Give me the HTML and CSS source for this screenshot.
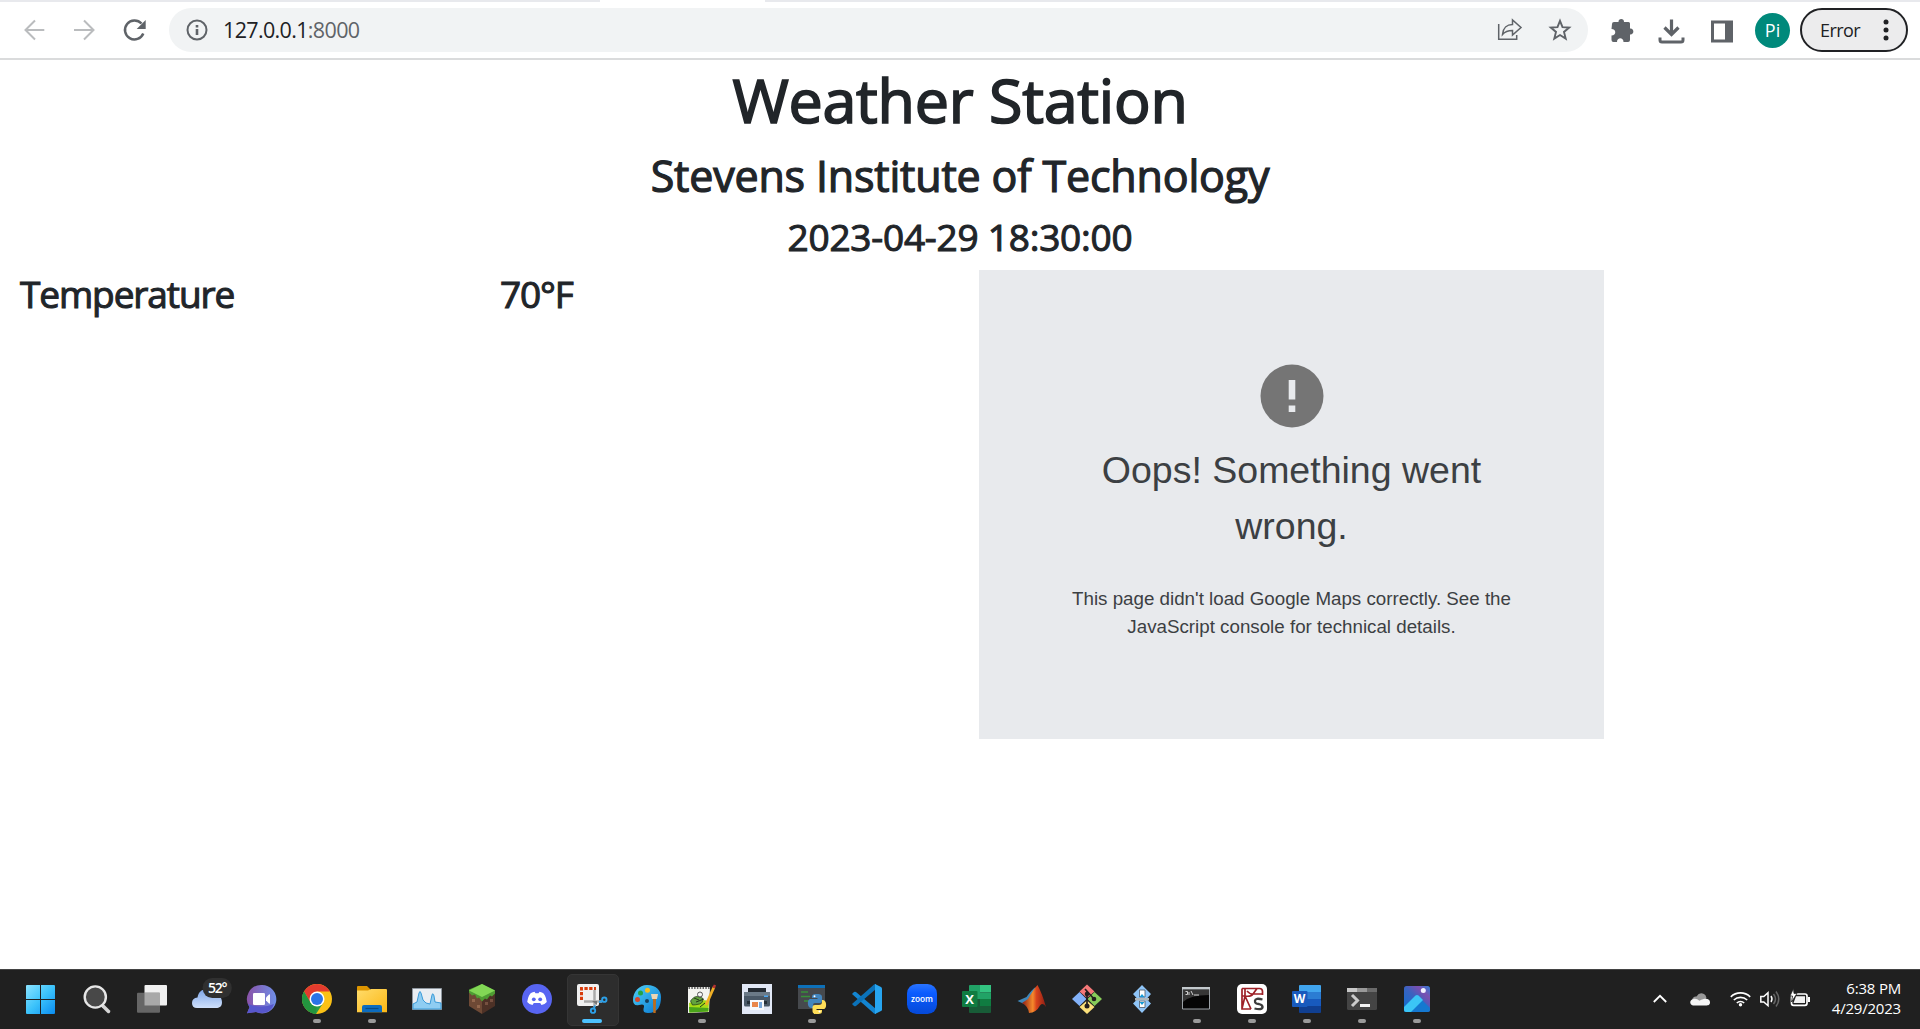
FILE: index.html
```
<!DOCTYPE html>
<html lang="en">
<head>
<meta charset="utf-8">
<title>Weather Station</title>
<link rel="stylesheet" href="styles.css">
</head>
<body>
<div class="screen">
  <div class="tabstrip"><span class="tab"></span></div>
  <header class="toolbar">
    <svg class="nav" width="144" height="56" viewBox="0 0 144 56" fill="none" stroke-width="2">
      <g stroke="#babcbe"><path d="M44.300 28H25.500M35 18.500L25.500 28l9.500 9.500M74 28h19.500M84 18.500l9.500 9.500-9.500 9.500"/></g>
      <path d="M143.300 31.500A9.500 9.500 0 1 1 141.500 21.500" stroke="#5f6368" stroke-width="2.500"/>
      <path d="M145.700 18v9h-9z" fill="#5f6368"/>
    </svg>
    <div class="omnibox">
      <svg width="22" height="22" viewBox="0 0 22 22"><circle cx="11" cy="11" r="9.500" fill="none" stroke="#5f6368" stroke-width="2"/><path d="M9.700 10h2.600v6H9.700zM9.700 6h2.600v2.400H9.700z" fill="#5f6368"/></svg>
      <span class="url">127.0.0.1<span class="port">:8000</span></span>
      <svg class="share" width="26" height="24" viewBox="0 0 26 24" fill="none" stroke="#5f6368" stroke-width="1.500"><path d="M1.700 6v15.300h18V17"/><path d="M5.500 16.500C6 10 10 6.500 15.500 6.500V2L24 9.500 15.500 17v-4.500C11 12.500 8 13.500 5.500 16.500z"/></svg>
      <svg class="star" width="24" height="24" viewBox="0 0 24 24" fill="none" stroke="#5f6368" stroke-width="1.900"><path d="M12 2.800l2.500 6.300 6.700.5-5.200 4.300 1.700 6.700L12 17l-5.700 3.600L8 13.900 2.800 9.600l6.700-.5z"/></svg>
    </div>
    <svg class="actions" width="130" height="28" viewBox="0 0 130 28" fill="#5f6368">
      <path d="M2 8q0-2 2-2h4.500C8 2 14.500 2 14 6h4.500q1.500 0 1.500 1.500v5c4.500-.5 4.500 6.500 0 6v5.500q0 2-2 2h-4.500c0-5-6.500-5-6.500 0H3.500q-2 0-2-2v-4.500c5 0 5-6.500 0-6.500z"/>
      <path d="M50 21.500v2.500q0 2 2 2h19q2 0 2-2v-2.500" fill="none" stroke="#5f6368" stroke-width="3"/><path d="M61.500 3.500v14M54.500 11.500l7 7 7-7" fill="none" stroke="#5f6368" stroke-width="3.200"/>
      <path fill-rule="evenodd" d="M101 4.500h22v22h-22zM104 7.500v16h11V7.500z"/>
    </svg>
    <div class="avatar">Pi</div>
    <div class="error"><span>Error</span><svg width="6" height="24" viewBox="0 0 6 24" fill="#202124"><circle cx="3" cy="4" r="2.500"/><circle cx="3" cy="12" r="2.500"/><circle cx="3" cy="20" r="2.500"/></svg></div>
  </header>

  <main class="page">
    <h1>Weather Station</h1>
    <h2>Stevens Institute of Technology</h2>
    <h3 class="time">2023-04-29 18:30:00</h3>
    <div class="row">
      <h3 class="label">Temperature</h3>
      <h3 class="value">70°F</h3>
      <section class="map">
        <svg width="64" height="64" viewBox="0 0 64 64"><circle cx="32" cy="32" r="31.500" fill="#757575"/><path d="M28.700 16h6.600v19.500h-6.600zM28.700 41.500h6.600v6.500h-6.600z" fill="#e8eaed"/></svg>
        <p class="oops">Oops! Something went wrong.</p>
        <p class="detail">This page didn't load Google Maps correctly. See the JavaScript console for technical details.</p>
      </section>
    </div>
  </main>

  <footer class="taskbar">
    <svg width="0" height="0" class="defs"><defs>
      <linearGradient id="win" x1="0" y1="0" x2="1" y2="1"><stop offset="0" stop-color="#8be3ff"/><stop offset=".5" stop-color="#3cc3fb"/><stop offset="1" stop-color="#0a8cf0"/></linearGradient>
      <linearGradient id="cloud" x1="0" y1="0" x2="0" y2="1"><stop offset="0" stop-color="#7fa6e8"/><stop offset="1" stop-color="#cfe0fb"/></linearGradient>
      <linearGradient id="chat" x1="0" y1="0" x2="1" y2="0"><stop offset="0" stop-color="#8a52a8"/><stop offset="1" stop-color="#6f8fe8"/></linearGradient>
      <linearGradient id="folder" x1="0" y1="0" x2="1" y2="1"><stop offset="0" stop-color="#ffdc6b"/><stop offset="1" stop-color="#fcb714"/></linearGradient>
      <linearGradient id="pal" x1="0" y1="0" x2="1" y2="1"><stop offset="0" stop-color="#4fd0f5"/><stop offset="1" stop-color="#0878d4"/></linearGradient>
      <linearGradient id="mat" x1="0" y1="0" x2="1" y2="0"><stop offset="0" stop-color="#8c1c14"/><stop offset=".45" stop-color="#f58a2c"/><stop offset=".6" stop-color="#d9441c"/><stop offset="1" stop-color="#8c1c14"/></linearGradient>
      <linearGradient id="photo" x1="0" y1="1" x2="1" y2="0"><stop offset="0" stop-color="#0a6fd0"/><stop offset=".5" stop-color="#3a62c0"/><stop offset=".75" stop-color="#7b4fb0"/><stop offset="1" stop-color="#2f7fd8"/></linearGradient>
      <linearGradient id="zm" x1="0" y1="0" x2="0" y2="1"><stop offset="0" stop-color="#2a74ff"/><stop offset=".3" stop-color="#0b5cff"/><stop offset="1" stop-color="#0549d8"/></linearGradient>
    </defs></svg>
    <div class="apps">
      <div class="app"><svg viewBox="0 0 55 60"><path fill="url(#win)" d="M12 16h13v14H11V17q0-1 1-1zM26 16h13q1 0 1 1v13H26zM11 31h14v14H12q-1 0-1-1zM26 31h14v13q0 1-1 1H26z"/></svg></div>
      <div class="app"><svg viewBox="0 0 55 60"><path d="M33 37l5.500 5.500" stroke="#d4d4d4" stroke-width="3.500" stroke-linecap="round"/><circle cx="25.300" cy="28" r="10.600" fill="#484848" stroke="#e6e6e6" stroke-width="2.400"/></svg></div>
      <div class="app"><svg viewBox="0 0 55 60"><rect x="19.500" y="16" width="22.500" height="20.500" rx="1" fill="#f1f1f1"/><rect x="12" y="23.700" width="23" height="20" rx="1" fill="#666"/><path d="M19.500 23.700H35v12.800H19.500z" fill="#a9a9a9"/></svg></div>
      <div class="app"><svg viewBox="0 0 55 60"><path d="M17 39q-5 0-5-5t5.500-5.500C19 18 31 18 32.500 27 39 24 42 29 42 33.500 42 39 37 39 36 39z" fill="url(#cloud)"/><rect x="22.700" y="9" width="29" height="20" rx="9.500" fill="#303030"/><text class="t" x="28" y="24" textLength="19.500" fill="#fff" font-size="14">52°</text></svg></div>
      <div class="app"><svg viewBox="0 0 55 60"><path d="M26.500 16a14.200 14.200 0 1 1-5.500 27l-9 1.300 2.500-6A14.200 14.200 0 0 1 26.500 16z" fill="url(#chat)"/><path d="M13 35q13 5 26 0-3 9-12.500 9-3 0-5.500-1l-9 1.300 2.500-6z" fill="#5757cc"/><rect x="18" y="24" width="12" height="12" rx="1.300" fill="#fff"/><path d="M31 28.500l3-3q1-.5 1 .5v8q0 1-1 .5l-3-3z" fill="#fff"/></svg></div>
      <div class="app run"><svg viewBox="0 0 55 60"><circle cx="27" cy="30" r="15" fill="#fbc116"/><path d="M14 22.500a15 15 0 0 0 12 22.400l7.500-11.400H20.500z" fill="#2a9c49"/><path d="M14 22.500a15 15 0 0 1 26 0H27l-6.500 11z" fill="#e33b2e"/><path d="M14 22.500l7 12 6 2-1.500 8.400A15 15 0 0 1 14 22.500z" fill="#23953f"/><circle cx="27" cy="30" r="7.500" fill="#fff"/><circle cx="27" cy="30" r="6" fill="#2a74e8"/></svg></div>
      <div class="app run"><svg viewBox="0 0 55 60"><path d="M12 18q0-1 1-1h9l3 3v5H12z" fill="#dd9500"/><path d="M12 21.500h11l3-1.500h15q1 0 1 1v22.300H12z" fill="url(#folder)"/><path d="M17 43.300V38q0-2 2-2h16q2 0 2 2v5.300z" fill="#0c6cbf"/><path d="M20.500 39.500h13" stroke="#074a86" stroke-width="1.200"/></svg></div>
      <div class="app"><svg viewBox="0 0 55 60"><path d="M12.500 19.500h29v21h-29z" fill="#e9edf2" stroke="#8f979f"/><path d="M13 35l4-2 2-9q1-3 2 0l2 7 3 3 4 1 2-9q1-3 2 1l1 6 6 1v6H13z" fill="#8fcdf2" stroke="#3b9bd8" stroke-width="1"/></svg></div>
      <div class="app"><svg viewBox="0 0 55 60"><path d="M14 21l13 7v17l-13-8z" fill="#6e4935"/><path d="M40 21l-13 7v17l13-8z" fill="#4d3126"/><path d="M27 15l13 6.500v3l-3 3-2-1-3 4-2-1-3 3-3-4-2 1-2-4-3 1-3-3v-3z" fill="#4f9c33"/><path d="M27 15l13 6.500L27 28l-13-6.500z" fill="#82d755"/><path d="M17 30h3v3h-3zM22 36h3v3h-3z" fill="#93674d"/><path d="M30 33h3v3h-3zM35 30h3v3h-3z" fill="#765040"/></svg></div>
      <div class="app"><svg viewBox="0 0 55 60"><circle cx="27" cy="30" r="15" fill="#5865f2"/><path d="M22 23.500l2.500-.7 1 1.500h3l1-1.500 2.500.7q3.500 1 4.800 9.500-2 2.500-5.300 3l-1.300-2h-6.400l-1.300 2q-3.300-.5-5.300-3Q18.500 24.500 22 23.500z" fill="#fff"/><circle cx="23.800" cy="30.300" r="1.900" fill="#5865f2"/><circle cx="30.200" cy="30.300" r="1.900" fill="#5865f2"/></svg></div>
      <div class="app active"><svg viewBox="0 0 55 60"><rect x="12" y="15" width="22" height="22" rx="2" fill="#f0f0f0"/><path d="M16.500 31V19.500H31" fill="none" stroke="#d83b0b" stroke-width="3" stroke-dasharray="3.300 1.500"/><path d="M29.500 21v17M19 32.500h18" stroke="#aaa" stroke-width="2.500"/><path d="M27 32h5v4z" fill="#777"/><circle cx="39.300" cy="30.700" r="2.200" fill="none" stroke="#2ca0e8" stroke-width="1.900"/><circle cx="28" cy="41.700" r="2.200" fill="none" stroke="#2ca0e8" stroke-width="1.900"/><path d="M34 33l4-1M29 39.500l1-3" stroke="#2ca0e8" stroke-width="1.900"/></svg></div>
      <div class="app"><svg viewBox="0 0 55 60"><path d="M27 16c9 0 14 5 14 12 0 9-3 16-13 16-5 0-5-3-4-6 .5-3-2-3-5-2-4 1-6-1-6-5 0-8 6-15 14-15z" fill="url(#pal)"/><circle cx="17.500" cy="30.500" r="2.500" fill="#d8482b"/><circle cx="20.500" cy="24" r="2.500" fill="#24a347"/><circle cx="27.500" cy="21.300" r="2.500" fill="#f9be1c"/><circle cx="27" cy="32" r="2" fill="#16405e"/><path d="M31 25h7l-1 5h-5z" fill="#ead5b4"/><path d="M33 30h3l-.3 14h-2.400z" fill="#bd6c1c"/></svg></div>
      <div class="app run"><svg viewBox="0 0 55 60"><path d="M13 18h22l-1 25-21 1z" fill="#f4f4f0"/><path d="M13.500 19h21" stroke="#666" stroke-width="2" stroke-dasharray="1.500 1.300"/><path d="M14 34q9-5 20-2l-.5 10.500-19 1z" fill="#a7dc16"/><path d="M14 38l19.500 1-.2 3.500-19 1z" fill="#4aa51a"/><path d="M15.500 32q4-6 9-4l3 1q1 5-3 6t-7 1z" fill="#63a33e" stroke="#1c3716" stroke-width=".7"/><circle cx="25" cy="25.500" r="2.500" fill="#f6f6f6" stroke="#555"/><path d="M21 33l8-3M19 29l5 2M25 38l5-4" stroke="#243b1a" fill="none"/><path d="M39 18L31 36" stroke="#efaf25" stroke-width="2.800"/><path d="M40 16l-1.500 3" stroke="#b63232" stroke-width="2.500"/></svg></div>
      <div class="app"><svg viewBox="0 0 55 60"><path d="M12 15h30v30H12z" fill="#e2e8f6"/><path d="M18 19h18v6H18z" fill="#242b33"/><rect x="14" y="23" width="26" height="14.500" rx="1.500" fill="#4a5968"/><path d="M14 23h26v4H14z" fill="#6b7a88"/><path d="M34 26.500h4v1.500h-4z" fill="#4da8f2"/><path d="M17 32h20v3H17z" fill="#25303a"/><path d="M20 31h14v10H20z" fill="#f7f9fc"/><path d="M22 33h6v5h-6z" fill="#e9864a"/><path d="M29 33h3v6h-3z" fill="#79a8dc"/></svg></div>
      <div class="app run"><svg viewBox="0 0 55 60"><path d="M13 16h27v24H13z" fill="#46494d"/><path d="M13 16h27v3H13z" fill="#0d70b8"/><path d="M16 23h7M16 27.500h9M19 32h5" stroke="#38903a" stroke-width="1.500"/><path d="M32 25c-5 0-5 1-5 4h5.500v1H25c-3 0-3 9 1 9h2v-3q0-2 2-2h5q2 0 2-2v-4c0-3-3-3-5-3z" fill="#4386be"/><path d="M32 45c5 0 5-1 5-4h-5.500v-1H39c3 0 3-9-1-9h-1v2q0 3-3 3h-4q-2.500 0-2.500 2v4c0 3 3 3 4.500 3z" fill="#ffde58"/><circle cx="29.500" cy="27.300" r="1" fill="#fff"/><circle cx="34.500" cy="42.500" r="1" fill="#fff"/></svg></div>
      <div class="app"><svg viewBox="0 0 55 60"><path d="M12 25l2-2q1-.6 2 0l20 17v5l-2-.5z" fill="#1385d1"/><path d="M12 35l2 2q1 .6 2 0l20-17v-5l-2 .5z" fill="#0b72b9"/><path d="M35 15l6 3q1 .5 1 1.500v21q0 1-1 1.500l-6 3z" fill="#27a5f0"/></svg></div>
      <div class="app"><svg viewBox="0 0 55 60"><rect x="12" y="15" width="30" height="30" rx="9.500" fill="url(#zm)"/><text class="z" x="16" y="32.500" textLength="22" lengthAdjust="spacingAndGlyphs" font-size="8.500" fill="#fff">zoom</text></svg></div>
      <div class="app"><svg viewBox="0 0 55 60"><path d="M19 17q0-1 1-1h10v14H19z" fill="#21a266"/><path d="M30 16h11v7.500H30z" fill="#33c481"/><path d="M30 23.500h11V30H30z" fill="#21a366"/><path d="M19 30h22v13q0 1-1 1H20q-1 0-1-1z" fill="#185c37"/><path d="M30 30h11v7H30z" fill="#107c41"/><rect x="12" y="22" width="15.500" height="16" rx="1" fill="#107c41"/><text class="o" x="19.500" y="34.500" text-anchor="middle" font-size="13" fill="#fff">X</text></svg></div>
      <div class="app"><svg viewBox="0 0 55 60"><path d="M12.500 32l9-4q5-7 9-10l-4 13-5 5z" fill="#3f87ba"/><path d="M17 34l6-4q5-9 9.500-14Q37 24 41 38q-3-5-6-1.500-4 7.500-11 7.500-1-7-7-10z" fill="url(#mat)"/></svg></div>
      <div class="app"><svg viewBox="0 0 55 60"><path d="M27 15.500l7.500 7L27 29l-7.500-6.500z" fill="#f57878"/><path d="M34.500 23l7.500 7-7.500 7-7-7z" fill="#88cc5a"/><path d="M27 31.500l7.500 6.500-7.500 7-7.500-7z" fill="#fbe07a"/><path d="M19.500 23l7 7-7 7-7.500-7z" fill="#83b2f9"/><path d="M27 22v16M25 20l9 10" stroke="#241e1e" stroke-width="1.700"/><circle cx="27" cy="25" r="2.300" fill="#241e1e"/><circle cx="34" cy="30" r="2.300" fill="#241e1e"/><circle cx="27" cy="37" r="2.500" fill="#241e1e"/></svg></div>
      <div class="app"><svg viewBox="0 0 55 60"><path d="M27 16l9 9-4.500 5 4.500 4.500L27 44l-9-9.500 4.500-4.500-4.500-5z" fill="#8fc5f8"/><path d="M24.500 21h5.500v7h-5.500zM24.500 32h5.500v6.500h-5.500z" fill="#fff" stroke="#4c5966" stroke-width=".8"/><path d="M20 29h14v2.500H20z" fill="#afb7bb"/><path d="M27 25l2.500 3h-5zM24.500 33h5L27 36z" fill="#159bd8"/></svg></div>
      <div class="app run"><svg viewBox="0 0 55 60"><path d="M12.500 18.500h27v21.500h-27z" fill="#050505" stroke="#9ba1a6"/><path d="M12 18h28v2.500H12z" fill="#c3c9cd"/><path d="M13 21h26v5q-19 0-26 7z" fill="#363636"/><path d="M15.500 22.500h2v3h-2M19 23v3M21 22l2 4M24 26h5" fill="none" stroke="#d0d0d0"/></svg></div>
      <div class="app run"><svg viewBox="0 0 55 60"><rect x="12" y="15" width="30" height="30" rx="5" fill="#fff"/><path d="M17 19.500h17.500q3 0 3 3V26M17 19.500v20.500h9M20 19.500v8l-3 12M20 27q6 1 8-2l4-5.500M17 27h3l6 13M28 25h9.500M22 22q4 4 6 3" fill="none" stroke="#9d2027" stroke-width="1.700"/><path d="M37.500 30.500q-7-2-7.500 1.200t4 3.300q4 1 3.500 3.500-1 2.800-8 1" fill="none" stroke="#3c3c3c" stroke-width="2.300"/></svg></div>
      <div class="app run"><svg viewBox="0 0 55 60"><path d="M19 23v-6q0-1 1-1h20q1 0 1 1v6z" fill="#41a5ee"/><path d="M19 23h22v7H19z" fill="#2b7cd3"/><path d="M19 30h22v7H19z" fill="#185abd"/><path d="M19 37h22v6q0 1-1 1H20q-1 0-1-1z" fill="#103f91"/><rect x="12" y="22" width="15.500" height="16" rx="1" fill="#185abd"/><text class="o" x="19.500" y="34.300" text-anchor="middle" font-size="12" fill="#fff">W</text></svg></div>
      <div class="app run"><svg viewBox="0 0 55 60"><rect x="12" y="19" width="30" height="22" rx="1.500" fill="#444"/><path d="M12 19h10v4H12z" fill="#c8c8c8"/><path d="M22 19h10v4H22z" fill="#999"/><path d="M32 19h10v4H32z" fill="#6a6a6a"/><path d="M17 26l5.500 5.500L17 37" fill="none" stroke="#ccc" stroke-width="3"/><path d="M25 36.500h10" stroke="#f4f4f4" stroke-width="3"/></svg></div>
      <div class="app run"><svg viewBox="0 0 55 60"><rect x="14" y="17" width="26" height="26" rx="2.500" fill="url(#photo)"/><path d="M14 39l11.500-11.500q1.500-1 3 0L40 39v1.500q0 2.500-2.500 2.500h-21Q14 43 14 40.500z" fill="#1578d0"/><path d="M14 38l11.500-11.500q1.500-1 3 0L33 31 21 43h-4.500Q14 43 14 40.500z" fill="#3bc5f6"/><circle cx="33.300" cy="21.500" r="2.500" fill="#f2f2ff"/></svg></div>
    </div>
    <div class="tray">
      <svg width="14" height="24" viewBox="0 0 14 24" fill="none" stroke="#fff" stroke-width="1.800"><path d="M.8 15L7 8.800l6.200 6.200"/></svg>
      <svg class="onedrive" width="20" height="24" viewBox="0 0 20 24"><path d="M2 13q1-4 4.500-3.500 3-5 7.500-2.500 2 1 2.500 4L10 18z" fill="#989898"/><path d="M3 18.500c-4-1-3.500-6 .5-6.500 3-.5 4 .5 6 1.800 6-3.500 10.500-2 10.500 1.500 0 3-2 3.200-4 3.200z" fill="#f5f5f5"/></svg>
      <svg class="wifi" width="21" height="24" viewBox="0 0 21 24" fill="none" stroke="#fff" stroke-width="1.600"><path d="M.8 9.800a14 14 0 0 1 19.400 0M3.800 13a9.800 9.800 0 0 1 13.400 0M6.800 16a5.500 5.500 0 0 1 7.400 0"/><circle cx="10.500" cy="17.700" r="1.700" fill="#fff" stroke="none"/></svg>
      <svg class="sound" width="20" height="24" viewBox="0 0 20 24" fill="none" stroke="#fff" stroke-width="1.500"><path d="M.8 9.500h3L8 5.700v13L3.800 15h-3zM11 9q2 3 0 6"/><path d="M13.500 7q4 5 0 10M16 4.500q5.500 7.500 0 15" stroke="#666"/></svg>
      <svg class="battery" width="21" height="24" viewBox="0 0 21 24"><rect x="1.500" y="7" width="15.500" height="11.300" rx="2" fill="none" stroke="#fff" stroke-width="1.700"/><path d="M6 9.300h9V16H3.500z" fill="#f2f2f2"/><path d="M18 10h2v5h-2z" fill="#fff"/><path d="M3.500 1.500L0 9h2.500l-1 6L7 6.500H4z" fill="#fff" stroke="#202020" stroke-width=".8"/></svg>
      <div class="clock"><span>6:38 PM</span><span>4/29/2023</span></div>
    </div>
  </footer>
</div>
</body>
</html>
```
FILE: styles.css
```
* { box-sizing: border-box; }
body { margin: 0; background: #fff; font-family: "Open Sans", "Noto Sans", sans-serif; }
svg { display: block; flex: none; }
.screen { width: 1920px; height: 1029px; display: flex; flex-direction: column; overflow: hidden; }

.tabstrip { height: 2px; background: #e8e9ed; padding-left: 600px; }
.tab { display: block; width: 165px; height: 2px; background: #fff; }

.toolbar { height: 58px; border-bottom: 2px solid #dadbdc; display: flex; align-items: center; }
.nav { overflow: visible; }
.omnibox { margin-left: 25px; width: 1419px; height: 44px; border-radius: 22px; background: #f1f3f4; display: flex; align-items: center; padding: 0 16px 0 17px; }
.url { margin-left: 15px; font-size: 21.500px; font-weight: 400; font-stretch: 93%; letter-spacing: -0.650px; line-height: 30px; color: #202124; }
.port { color: #5f6368; }
.share { margin-left: auto; }
.star { margin-left: 25px; }
.actions { margin-left: 22px; }
.avatar { width: 35px; height: 35px; margin-left: 15px; border-radius: 50%; background: #00897b; color: #fff; font-size: 18px; line-height: 35px; text-align: center; }
.error { width: 108px; height: 44px; margin-left: 10px; border: 2px solid #202124; border-radius: 22px; background: #ececed; display: flex; align-items: center; justify-content: space-between; padding: 0 17px 0 18px; font-size: 18px; font-weight: 400; letter-spacing: -0.550px; color: #202124; }

.page { flex: 1; color: #212529; }
h1, h2, h3, p { margin: 0; }
/* a thin stroke gives the headings a medium weight */
h1, h2, h3 { font-weight: 400; text-align: center; -webkit-text-stroke: 0.028em #212529; }
h1 { font-size: 61px; line-height: 80px; height: 88px; letter-spacing: -0.250px; }
h2 { font-size: 43px; line-height: 56px; height: 65px; letter-spacing: -0.180px; }
h3 { font-size: 37px; line-height: 45px; letter-spacing: -0.220px; }
.time { height: 57px; padding-top: 1px; }
.row { display: grid; grid-template-columns: 480px 480px 644px; }
.label, .value { text-align: left; padding: 1px 0 0 20px; letter-spacing: -1.100px; }
.map { width: 625px; height: 469px; justify-self: end; background: #e8eaed; display: flex; flex-direction: column; align-items: center; padding-top: 94px; font-family: "Liberation Sans", Arial, sans-serif; text-align: center; color: #3c4043; }
.oops { width: 440px; margin-top: 14px; font-size: 37.500px; line-height: 56px; }
.detail { width: 460px; margin-top: 31px; font-size: 18.750px; line-height: 28px; }

.taskbar { height: 60px; background: #202020; border-top: 1px solid #434343; display: flex; justify-content: space-between; }
.defs { position: absolute; }
.apps { display: flex; padding-left: 15px; margin-top: -1px; }
.app { width: 55px; height: 60px; position: relative; }
.app svg { width: 55px; height: 60px; position: relative; }
.run::after, .active::after { content: ""; position: absolute; left: 23px; top: 50px; width: 8px; height: 4px; border-radius: 2px; background: #9a9a9a; }
.active::before { content: ""; position: absolute; left: 2px; top: 5px; width: 50px; height: 50px; border-radius: 5px; background: #2d2d2d; border: 1px solid #353535; }
.active::after { left: 17px; width: 20px; background: #4cc2ff; }
.t { font-family: "Open Sans", sans-serif; font-weight: 600; }
.z { font-family: "Open Sans", sans-serif; font-weight: 600; }
.o { font-family: "Open Sans", sans-serif; font-weight: 700; }
.tray { display: flex; align-items: center; padding: 0 19px 2px 0; }
.onedrive { margin-left: 23px; }
.wifi { margin-left: 20px; }
.sound { margin-left: 9px; }
.battery { margin-left: 10px; }
.clock { width: 90px; padding-bottom: 2px; display: flex; flex-direction: column; align-items: flex-end; font-size: 15px; line-height: 20px; color: #fff; letter-spacing: -0.200px; }
```
